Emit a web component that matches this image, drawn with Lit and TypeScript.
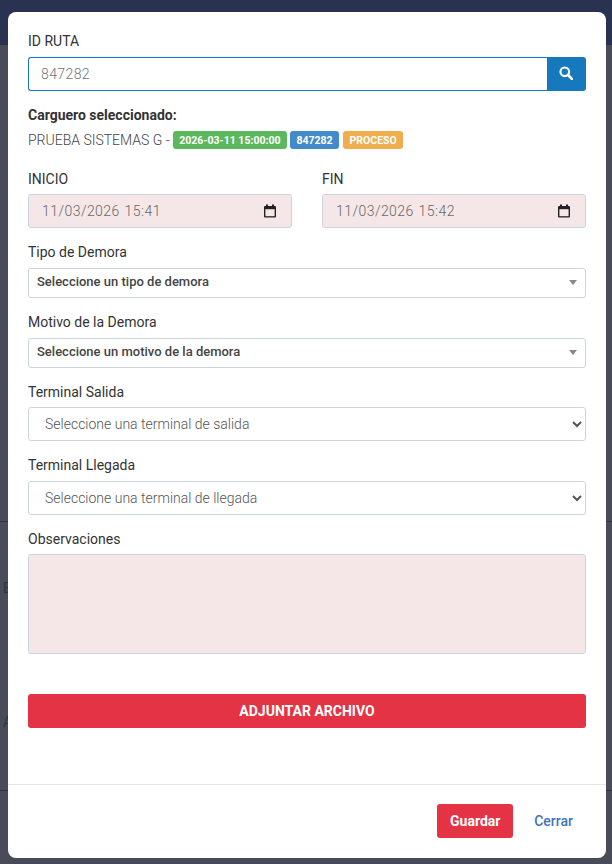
import { html, LitElement, css } from 'lit';
import { customElement } from 'lit/decorators.js';

const calendarIcon = html`
  <svg class="cal" width="14" height="14" viewBox="0 0 14 14">
    <path d="M3 .5h2V2h4V.5h2V2h1a1 1 0 0 1 1 1v9.5a1 1 0 0 1-1 1H2a1 1 0 0 1-1-1V3a1 1 0 0 1 1-1h1z" fill="#222"/>
    <rect x="2.4" y="5.2" width="9.2" height="7" fill="#f5e7e7"/>
  </svg>
`;

@customElement('app-root')
export default class AppRoot extends LitElement {
  static styles = [
    css`
      :host {
        display: block;
        height: 864px;
        overflow: hidden;
        font-family: Roboto, "Liberation Sans", sans-serif;
        font-size: 14px;
        color: #333;
      }
      * {
        box-sizing: border-box;
      }
      .page {
        position: relative;
        height: 864px;
        padding: 12px 6px 6px 8px;
        background: #494c58;
      }
      .nav {
        position: absolute;
        left: 0;
        right: 0;
        top: 0;
        height: 45px;
        background: #293251;
      }
      .rule {
        position: absolute;
        left: 0;
        right: 0;
        height: 1px;
        background: #33353e;
      }
      .ghost {
        position: absolute;
        left: 3px;
        color: #33353e;
        font-size: 14px;
      }
      .modal {
        position: relative;
        height: 846px;
        display: flex;
        flex-direction: column;
        background: #fff;
        border-radius: 8px;
      }
      .body {
        flex: 1;
        padding: 21px 20px 0;
      }
      .label {
        display: block;
        height: 17px;
        line-height: 17px;
        color: #333;
      }
      .search {
        display: flex;
        height: 34px;
        margin-top: 7px;
      }
      .search .value {
        flex: 1;
        display: flex;
        align-items: center;
        padding-left: 12px;
        border: 1px solid #1679bd;
        border-right: 0;
        border-radius: 3px 0 0 3px;
        color: #6c757d;
        font-weight: 300;
        letter-spacing: 0.4px;
      }
      .search button {
        width: 39px;
        padding: 0 2px 2px 0;
        border: 0;
        display: flex;
        align-items: center;
        justify-content: center;
        background: #1679bd;
        border-radius: 0 3px 3px 0;
      }
      .carguero {
        margin-top: 16px;
        height: 17px;
        line-height: 17px;
        font-weight: 700;
        color: #333;
      }
      .info {
        display: flex;
        align-items: center;
        margin-top: 7px;
        height: 18px;
        color: #444;
        font-weight: 300;
      }
      .badge {
        display: inline-flex;
        align-items: center;
        height: 18px;
        padding: 0 6.5px;
        margin-left: 3px;
        border-radius: 3px;
        color: #fff;
        font-size: 10.5px;
        font-weight: 700;
      }
      .green {
        background: #5cb85c;
      }
      .blue {
        background: #428bca;
      }
      .orange {
        margin-left: 4px;
        background: #f0ad4e;
      }
      .dates {
        display: grid;
        grid-template-columns: 264px 264px;
        justify-content: space-between;
        margin-top: 22px;
      }
      .date {
        display: flex;
        align-items: center;
        justify-content: space-between;
        height: 34px;
        margin-top: 6px;
        padding: 0 14px 0 13px;
        background: #f5e7e7;
        border: 1px solid #cad5de;
        border-radius: 3px;
        color: #666;
        font-weight: 300;
        letter-spacing: 0.45px;
        word-spacing: 1px;
      }
      .cal {
        display: block;
      }
      .group {
        margin-top: 16px;
      }
      .select2 {
        display: flex;
        align-items: center;
        justify-content: space-between;
        height: 30px;
        margin-top: 7px;
        padding: 0 8px 3px 8px;
        border: 1px solid #cad5de;
        border-radius: 3px;
        font-size: 13px;
        font-weight: 500;
        color: #444;
      }
      .caret {
        width: 0;
        height: 0;
        margin-top: 2px;
        border-left: 4px solid transparent;
        border-right: 4px solid transparent;
        border-top: 5px solid #888;
      }
      select {
        display: block;
        width: 100%;
        height: 34px;
        margin-top: 6px;
        padding: 0 0 0 12px;
        background: #fff;
        border: 1px solid #cad5de;
        border-radius: 3px;
        font-family: inherit;
        font-size: 14px;
        font-weight: 300;
        color: #555;
        outline: none;
      }
      select.lower {
        margin-top: 7px;
      }
      .obs {
        display: block;
        width: 100%;
        height: 100px;
        margin-top: 6px;
        background: #f5e7e7;
        border: 1px solid #cad5de;
        border-radius: 3px;
        resize: none;
      }
      .attach {
        display: block;
        width: 100%;
        height: 34px;
        margin-top: 40px;
        padding: 0;
        border: 0;
        border-radius: 3px;
        background: #e43345;
        color: #fff;
        font-family: inherit;
        font-size: 14px;
        font-weight: 700;
      }
      .footer {
        display: flex;
        justify-content: flex-end;
        align-items: center;
        height: 74px;
        padding: 0 21px 1px 0;
        border-top: 1px solid #e5e5e5;
      }
      .save {
        width: 76px;
        height: 34px;
        padding: 0;
        border: 0;
        border-radius: 3px;
        background: #e43345;
        color: #fff;
        font-family: inherit;
        font-size: 14px;
        font-weight: 700;
      }
      .close {
        height: 34px;
        margin-left: 9px;
        padding: 0 12px;
        border: 0;
        background: none;
        color: #3e74b9;
        font-family: inherit;
        font-size: 14px;
        font-weight: 500;
      }
    `
  ];

  render() {
    return html`
      <div class="page">
        <div class="nav"></div>
        <div class="rule" style="top:521px"></div>
        <div class="rule" style="top:790px"></div>
        <div class="ghost" style="top:580px">E</div>
        <div class="ghost" style="top:714px">A</div>
        <div class="modal">
          <div class="body">
            <div class="label">ID RUTA</div>
            <div class="search">
              <div class="value">847282</div>
              <button aria-label="Buscar">
                <svg width="14" height="14" viewBox="0 0 14 14" fill="none" stroke="#fff">
                  <circle cx="5.8" cy="5.8" r="4.3" stroke-width="2.2"/>
                  <path d="M9 9l4 4" stroke-width="2.6" stroke-linecap="round"/>
                </svg>
              </button>
            </div>
            <div class="carguero">Carguero seleccionado:</div>
            <div class="info">
              PRUEBA SISTEMAS G -
              <span class="badge green">2026-03-11 15:00:00</span>
              <span class="badge blue">847282</span>
              <span class="badge orange">PROCESO</span>
            </div>
            <div class="dates">
              <div>
                <div class="label">INICIO</div>
                <div class="date">11/03/2026 15:41 ${calendarIcon}</div>
              </div>
              <div>
                <div class="label">FIN</div>
                <div class="date">11/03/2026 15:42 ${calendarIcon}</div>
              </div>
            </div>
            <div class="group">
              <div class="label">Tipo de Demora</div>
              <div class="select2">Seleccione un tipo de demora<span class="caret"></span></div>
            </div>
            <div class="group">
              <div class="label">Motivo de la Demora</div>
              <div class="select2">Seleccione un motivo de la demora<span class="caret"></span></div>
            </div>
            <div class="group">
              <div class="label">Terminal Salida</div>
              <select><option>Seleccione una terminal de salida</option></select>
            </div>
            <div class="group">
              <div class="label">Terminal Llegada</div>
              <select class="lower"><option>Seleccione una terminal de llegada</option></select>
            </div>
            <div class="group">
              <div class="label">Observaciones</div>
              <textarea class="obs"></textarea>
            </div>
            <button class="attach">ADJUNTAR ARCHIVO</button>
          </div>
          <div class="footer">
            <button class="save">Guardar</button>
            <button class="close">Cerrar</button>
          </div>
        </div>
      </div>
    `;
  }
}
